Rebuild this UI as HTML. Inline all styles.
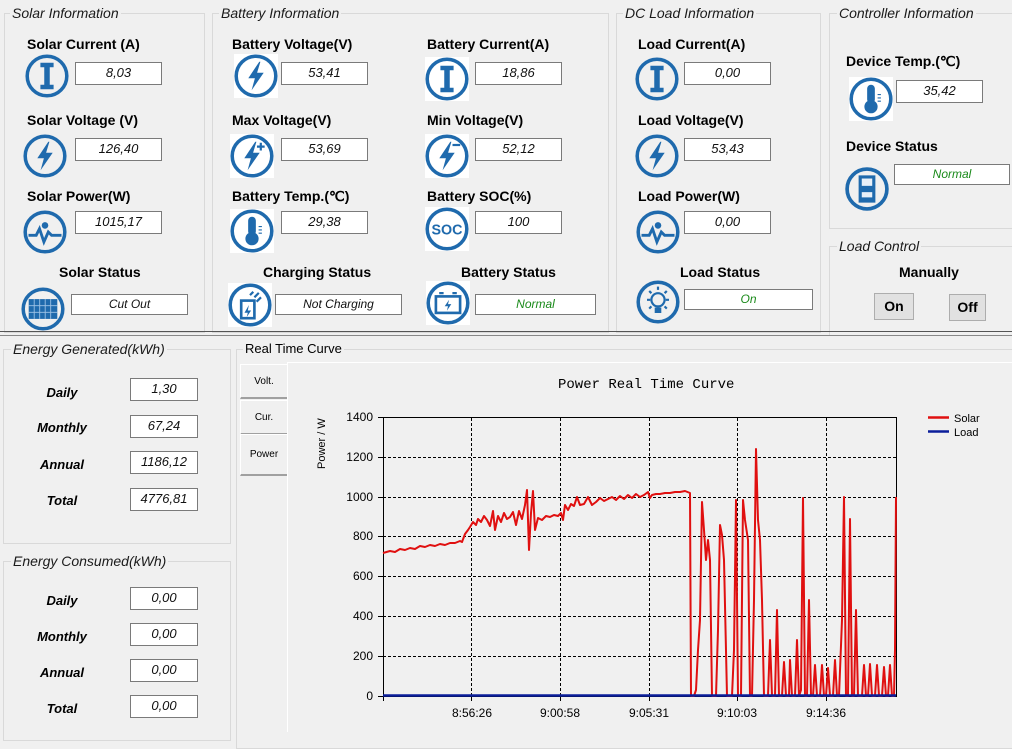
<!DOCTYPE html>
<html><head><meta charset="utf-8"><style>
*{margin:0;padding:0;box-sizing:border-box}
body{width:1012px;height:729px;background:#f0f0f0;position:relative;overflow:hidden;font-family:"Liberation Sans",sans-serif;color:#000}
.a{position:absolute}
.gb{position:absolute;border:1px solid #d9d9d9}
.gt{position:absolute;font-style:italic;font-size:14px;color:#1a1a1a;background:#f0f0f0;padding:0 2px;line-height:16px}
.lb{position:absolute;font-weight:bold;font-size:14px;line-height:16px;white-space:nowrap}
.bx{position:absolute;background:#fff;border:1px solid #7a7a7a;font-style:italic;font-size:13px;text-align:center;line-height:19px;color:#111}
.st{font-size:12px}
.gr{color:#1a8a1a}
.el{position:absolute;font-weight:bold;font-style:italic;font-size:13px;width:100px;text-align:center;line-height:16px}
.ic{position:absolute;width:44px;height:44px}
.btn{position:absolute;background:#e1e1e1;border:1px solid #adadad;font-weight:bold;font-size:14px;text-align:center}
.tab{position:absolute;left:240px;width:47px;font-size:10px;text-align:center;border-bottom:2px solid #a0a0a0;border-top:1px solid #fff;border-left:1px solid #fff}
.yl{position:absolute;width:40px;text-align:right;font-size:12px;line-height:14px}
.xl{position:absolute;width:70px;text-align:center;font-size:12px}
</style></head><body>

<div class="gb" style="left:4px;top:13px;width:201px;height:320px"></div><div class="gt" style="left:10px;top:5px">Solar Information</div>
<div class="gb" style="left:212px;top:13px;width:397px;height:320px"></div><div class="gt" style="left:219px;top:5px">Battery Information</div>
<div class="gb" style="left:616px;top:13px;width:205px;height:320px"></div><div class="gt" style="left:623px;top:5px">DC Load Information</div>
<div class="gb" style="left:829px;top:13px;width:190px;height:216px"></div><div class="gt" style="left:837px;top:5px">Controller Information</div>
<div class="gb" style="left:829px;top:246px;width:190px;height:90px"></div><div class="gt" style="left:837px;top:238px">Load Control</div>

<div class="a" style="left:0;top:331px;width:1012px;height:1px;background:#555"></div>
<div class="a" style="left:0;top:335px;width:1012px;height:1px;background:#888"></div>

<svg width="0" height="0" style="position:absolute"><defs>
<g id="ring"><circle cx="0" cy="0" r="18" fill="none" stroke="#1f6aad" stroke-width="3.2"/></g>
<g id="iI"><use href="#ring"/><path d="M-6,-12h12v4h-3.5v16h3.5v4h-12v-4h3.5v-16h-3.5z" fill="#1f6aad"/></g>
<g id="iV"><use href="#ring"/><path d="M3,-13 L-7,2 H-1 L-4,13 L7,-3 H1 L4,-13Z" fill="#1f6aad"/></g>
<g id="iP"><use href="#ring"/><polyline points="-15,3 -8,3 -5,-3 -1,9 3,0 6,3 15,3" fill="none" stroke="#1f6aad" stroke-width="2.6"/><circle cx="0" cy="-6" r="3" fill="#1f6aad"/></g>
<g id="iT"><use href="#ring"/><rect x="-3.5" y="-13" width="7" height="17" rx="3.5" fill="#1f6aad"/><circle cx="0" cy="7" r="6" fill="#1f6aad"/><path d="M6,-4h3M6,-1h3M6,2h3" stroke="#1f6aad" stroke-width="1"/></g>
</defs></svg>

<div class="lb" style="left:27px;top:36px">Solar Current (A)</div>
<svg class="ic" style="left:25px;top:54px" viewBox="-20 -20 40 40"><use href="#iI"/></svg>
<div class="bx" style="left:75px;top:62px;width:87px;height:23px">8,03</div>
<div class="lb" style="left:27px;top:112px">Solar Voltage (V)</div>
<svg class="ic" style="left:23px;top:134px" viewBox="-20 -20 40 40"><use href="#iV"/></svg>
<div class="bx" style="left:75px;top:138px;width:87px;height:23px">126,40</div>
<div class="lb" style="left:27px;top:188px">Solar Power(W)</div>
<svg class="ic" style="left:23px;top:210px" viewBox="-20 -20 40 40"><use href="#iP"/></svg>
<div class="bx" style="left:75px;top:211px;width:87px;height:23px">1015,17</div>
<div class="lb" style="left:59px;top:264px">Solar Status</div>
<svg class="ic" style="left:21px;top:287px" viewBox="-20 -20 40 40"><use href="#ring"/><rect x="-13" y="-9" width="26" height="18" fill="#1f6aad"/><path d="M-13,-3h26M-13,3h26M-8,-9v18M-3,-9v18M2,-9v18M7,-9v18" stroke="#9fc3e6" stroke-width="0.8"/></svg>
<div class="bx st" style="left:71px;top:294px;width:117px;height:21px">Cut Out</div>

<div class="lb" style="left:232px;top:36px">Battery Voltage(V)</div>
<svg class="ic" style="left:234px;top:54px;background:#fff" viewBox="-20 -20 40 40"><use href="#iV"/></svg>
<div class="bx" style="left:281px;top:62px;width:87px;height:23px">53,41</div>
<div class="lb" style="left:232px;top:112px">Max Voltage(V)</div>
<svg class="ic" style="left:230px;top:134px;background:#fff" viewBox="-20 -20 40 40"><use href="#iV"/><path d="M8,-12v7M4.5,-8.5h7" stroke="#1f6aad" stroke-width="2"/></svg>
<div class="bx" style="left:281px;top:138px;width:87px;height:23px">53,69</div>
<div class="lb" style="left:232px;top:188px">Battery Temp.(℃)</div>
<svg class="ic" style="left:230px;top:209px;background:#fff" viewBox="-20 -20 40 40"><use href="#iT"/></svg>
<div class="bx" style="left:281px;top:211px;width:87px;height:23px">29,38</div>
<div class="lb" style="left:263px;top:264px">Charging Status</div>
<svg class="ic" style="left:228px;top:283px;background:#fff" viewBox="-20 -20 40 40"><use href="#ring"/><rect x="-8" y="-4" width="12" height="16" fill="none" stroke="#1f6aad" stroke-width="2.4"/><path d="M-1,0 L-5,7 H-2 L-3,11 L1,5 H-2Z" fill="#1f6aad"/><path d="M0,-9l3,-3M4,-7l4,-4M6,-3l4,-4" stroke="#1f6aad" stroke-width="2"/></svg>
<div class="bx st" style="left:275px;top:294px;width:127px;height:21px">Not Charging</div>

<div class="lb" style="left:427px;top:36px">Battery Current(A)</div>
<svg class="ic" style="left:425px;top:57px;background:#fff" viewBox="-20 -20 40 40"><use href="#iI"/></svg>
<div class="bx" style="left:475px;top:62px;width:87px;height:23px">18,86</div>
<div class="lb" style="left:427px;top:112px">Min Voltage(V)</div>
<svg class="ic" style="left:425px;top:134px;background:#fff" viewBox="-20 -20 40 40"><use href="#iV"/><path d="M5,-10h7" stroke="#1f6aad" stroke-width="2"/></svg>
<div class="bx" style="left:475px;top:138px;width:87px;height:23px">52,12</div>
<div class="lb" style="left:427px;top:188px">Battery SOC(%)</div>
<svg class="ic" style="left:425px;top:207px;background:#fff" viewBox="-20 -20 40 40"><use href="#ring"/><text x="0" y="5" text-anchor="middle" font-family="Liberation Sans" font-weight="bold" font-size="13" fill="#1f6aad">SOC</text></svg>
<div class="bx" style="left:475px;top:211px;width:87px;height:23px">100</div>
<div class="lb" style="left:461px;top:264px">Battery Status</div>
<svg class="ic" style="left:426px;top:281px;background:#fff" viewBox="-20 -20 40 40"><use href="#ring"/><rect x="-11" y="-6" width="22" height="15" fill="none" stroke="#1f6aad" stroke-width="2.4"/><path d="M-8,-9h4M4,-9h4" stroke="#1f6aad" stroke-width="2"/><path d="M1,-3 L-3,3 H0 L-1,7 L3,1 H0Z" fill="#1f6aad"/></svg>
<div class="bx st gr" style="left:475px;top:294px;width:121px;height:21px">Normal</div>

<div class="lb" style="left:638px;top:36px">Load Current(A)</div>
<svg class="ic" style="left:635px;top:57px" viewBox="-20 -20 40 40"><use href="#iI"/></svg>
<div class="bx" style="left:684px;top:62px;width:87px;height:23px">0,00</div>
<div class="lb" style="left:638px;top:112px">Load Voltage(V)</div>
<svg class="ic" style="left:635px;top:134px" viewBox="-20 -20 40 40"><use href="#iV"/></svg>
<div class="bx" style="left:684px;top:138px;width:87px;height:23px">53,43</div>
<div class="lb" style="left:638px;top:188px">Load Power(W)</div>
<svg class="ic" style="left:636px;top:210px" viewBox="-20 -20 40 40"><use href="#iP"/></svg>
<div class="bx" style="left:684px;top:211px;width:87px;height:23px">0,00</div>
<div class="lb" style="left:680px;top:264px">Load Status</div>
<svg class="ic" style="left:636px;top:280px" viewBox="-20 -20 40 40"><use href="#ring"/><circle cx="0" cy="-2" r="6" fill="none" stroke="#1f6aad" stroke-width="2"/><rect x="-3" y="5" width="6" height="5" fill="#1f6aad"/><path d="M0,-14v3M-10,-2h3M7,-2h3M-8,-10l2,2M8,-10l-2,2M-8,6l2,-2M8,6l-2,-2" stroke="#1f6aad" stroke-width="2"/></svg>
<div class="bx st gr" style="left:684px;top:289px;width:129px;height:21px">On</div>

<div class="lb" style="left:846px;top:53px">Device Temp.(℃)</div>
<svg class="ic" style="left:849px;top:77px;background:#fff" viewBox="-20 -20 40 40"><use href="#iT"/></svg>
<div class="bx" style="left:896px;top:80px;width:87px;height:23px">35,42</div>
<div class="lb" style="left:846px;top:138px">Device Status</div>
<svg class="ic" style="left:845px;top:167px" viewBox="-21 -21 42 42"><circle r="19" fill="none" stroke="#1f6aad" stroke-width="3.5"/><rect x="-8" y="-13" width="16" height="26" fill="#1f6aad"/><rect x="-5" y="-10" width="10" height="7" fill="#e8f0f8"/><rect x="-5" y="3" width="10" height="5" fill="#e8f0f8"/></svg>
<div class="bx st gr" style="left:894px;top:164px;width:116px;height:21px">Normal</div>

<div class="lb" style="left:899px;top:264px">Manually</div>
<div class="btn" style="left:874px;top:293px;width:40px;height:27px;line-height:25px">On</div>
<div class="btn" style="left:949px;top:294px;width:37px;height:27px;line-height:25px">Off</div>

<div class="gb" style="left:3px;top:349px;width:228px;height:195px"></div><div class="gt" style="left:11px;top:341px">Energy Generated(kWh)</div>
<div class="el" style="left:12px;top:385px">Daily</div><div class="bx" style="left:130px;top:378px;width:68px;height:23px">1,30</div>
<div class="el" style="left:12px;top:420px">Monthly</div><div class="bx" style="left:130px;top:415px;width:68px;height:23px">67,24</div>
<div class="el" style="left:12px;top:457px">Annual</div><div class="bx" style="left:130px;top:451px;width:68px;height:23px">1186,12</div>
<div class="el" style="left:12px;top:493px">Total</div><div class="bx" style="left:130px;top:488px;width:68px;height:23px">4776,81</div>

<div class="gb" style="left:3px;top:561px;width:228px;height:180px"></div><div class="gt" style="left:11px;top:553px">Energy Consumed(kWh)</div>
<div class="el" style="left:12px;top:593px">Daily</div><div class="bx" style="left:130px;top:587px;width:68px;height:23px">0,00</div>
<div class="el" style="left:12px;top:629px">Monthly</div><div class="bx" style="left:130px;top:623px;width:68px;height:23px">0,00</div>
<div class="el" style="left:12px;top:665px">Annual</div><div class="bx" style="left:130px;top:659px;width:68px;height:23px">0,00</div>
<div class="el" style="left:12px;top:701px">Total</div><div class="bx" style="left:130px;top:695px;width:68px;height:23px">0,00</div>

<div class="gb" style="left:236px;top:349px;width:800px;height:400px"></div>
<div class="a" style="left:243px;top:341px;font-size:13px;background:#f0f0f0;padding:0 2px;line-height:16px">Real Time Curve</div>
<div class="tab" style="top:364px;height:35px;line-height:33px">Volt.</div>
<div class="tab" style="top:400px;height:35px;line-height:33px">Cur.</div>
<div class="tab" style="top:434px;height:42px;line-height:40px">Power</div>
<div class="a" style="left:287px;top:362px;width:730px;height:1px;background:#fff"></div>
<div class="a" style="left:287px;top:362px;width:1px;height:370px;background:#fff"></div>

<div class="a" style="left:558px;top:377px;font-family:'Liberation Mono',monospace;font-size:14px">Power Real Time Curve</div>
<div class="a" style="font-size:11px;transform:rotate(-90deg);transform-origin:left top;top:469px;left:316px">Power / W</div>
<div class="yl" style="left:333px;top:410px">1400</div>
<div class="yl" style="left:333px;top:450px">1200</div>
<div class="yl" style="left:333px;top:490px">1000</div>
<div class="yl" style="left:333px;top:529px">800</div>
<div class="yl" style="left:333px;top:569px">600</div>
<div class="yl" style="left:333px;top:609px">400</div>
<div class="yl" style="left:333px;top:649px">200</div>
<div class="yl" style="left:333px;top:689px">0</div>
<div class="xl" style="left:437px;top:706px">8:56:26</div>
<div class="xl" style="left:525px;top:706px">9:00:58</div>
<div class="xl" style="left:614px;top:706px">9:05:31</div>
<div class="xl" style="left:702px;top:706px">9:10:03</div>
<div class="xl" style="left:791px;top:706px">9:14:36</div>

<svg class="a" style="left:0;top:0" width="1012" height="729">
<g stroke="#000" stroke-width="1" stroke-dasharray="3,2">
<path d="M383,457.5H896M383,497.5H896M383,536.5H896M383,576.5H896M383,616.5H896M383,656.5H896"/>
<path d="M471.5,418V696M560.5,418V696M649.5,418V696M737.5,418V696M826.5,418V696"/>
</g>
<rect x="383.5" y="417.5" width="513" height="279" fill="none" stroke="#000"/>
<path d="M378,417.5h5M378,457.5h5M378,497.5h5M378,536.5h5M378,576.5h5M378,616.5h5M378,656.5h5M378,696.5h5M471.5,696v5M560.5,696v5M649.5,696v5M737.5,696v5M826.5,696v5M383.5,696v5" stroke="#000"/>
<polyline fill="none" stroke="#e01010" stroke-width="2" stroke-linejoin="round" points="383,553 390,551 395,552 400,549 405,550 410,548 415,549 420,546 425,547 430,545 435,546 440,544 445,545 450,543 455,543 460,541 462,542 465,534 468,530 470,527 473,522 476,525 478,519 481,522 484,516 487,520 490,526 493,511 495,530 498,516 501,522 504,513 507,519 510,517 513,512 516,525 519,511 522,519 525,505 527,490 529,550 531,513 533,491 535,530 538,518 542,520 546,516 550,517 554,515 558,516 561,513 563,520 565,505 568,510 571,504 574,506 577,497 580,505 584,504 588,497 592,505 596,502 600,498 604,501 608,499 612,497 616,500 620,496 624,499 628,495 632,498 636,494 640,497 644,495 648,492 650,498 652,495 656,494 660,494 665,493 670,493 675,492 680,492 685,491 690,493 691,696 694,696 696,690 698,650 700,620 702,502 704,530 706,560 708,540 710,560 712,696 716,696 718,630 720,525 722,535 724,560 727,696 732,696 734,650 736,500 738,696 741,696 743,500 745,520 748,540 750,696 752,696 754,600 756,449 758,520 760,540 762,600 764,696 768,696 770,640 772,696 775,696 777,610 779,696 782,696 784,662 786,696 789,696 790,660 792,696 795,696 797,640 799,696 801,690 803,498 805,696 807,696 809,600 811,696 813,696 815,665 817,696 820,696 822,665 824,696 826,696 828,668 830,696 833,696 835,660 837,696 839,696 842,620 844,497 846,696 848,696 850,519 852,696 854,696 856,610 858,696 862,696 864,665 866,696 868,696 870,664 872,696 875,696 877,665 879,696 882,696 884,667 886,696 888,696 890,665 892,696 894,696 895,650 896,497"/>
<path d="M383,695.5H896" stroke="#0b1e9a" stroke-width="2.5"/>
<path d="M928,417.5h21" stroke="#e01010" stroke-width="2.5"/>
<path d="M928,431.5h21" stroke="#0b1e9a" stroke-width="2.5"/>
<text x="954" y="422" font-family="Liberation Sans" font-size="11">Solar</text>
<text x="954" y="436" font-family="Liberation Sans" font-size="11">Load</text>
</svg>
</body></html>
